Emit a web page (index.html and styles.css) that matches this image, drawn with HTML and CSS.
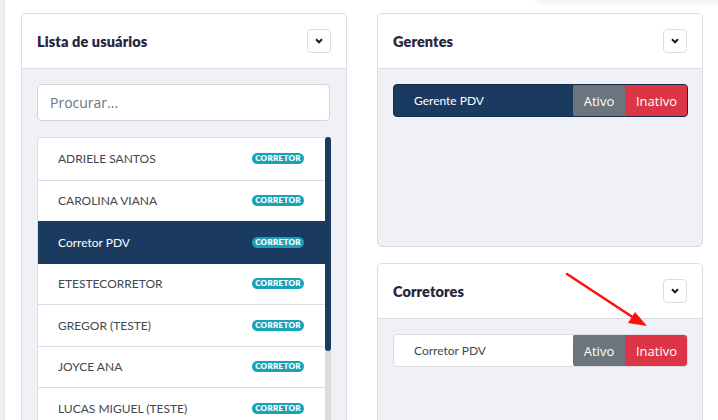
FILE: index.html
```html
<!DOCTYPE html>
<html lang="pt-BR">
<head>
<meta charset="utf-8">
<link rel="stylesheet" href="styles.css">
</head>
<body>
<div class="page">
  <div class="edge"></div>
  <div class="top-shadow"></div>
  <main class="columns">
    <section class="card card-users">
      <header class="card-header">
        <h2 class="card-title">Lista de usuários</h2>
        <button class="collapse-btn" type="button"><svg width="8" height="6" viewBox="0 0 8 6"><path d="M1 1.3 L4 4.3 L7 1.3" fill="none" stroke="#1c1c2a" stroke-width="2"/></svg></button>
      </header>
      <div class="card-body">
        <input class="search" type="text" placeholder="Procurar...">
        <div class="list-wrap">
          <ul class="user-list">
            <li class="user"><span class="user-name">ADRIELE SANTOS</span><span class="badge">CORRETOR</span></li>
            <li class="user"><span class="user-name">CAROLINA VIANA</span><span class="badge">CORRETOR</span></li>
            <li class="user user-active"><span class="user-name">Corretor PDV</span><span class="badge">CORRETOR</span></li>
            <li class="user"><span class="user-name">ETESTECORRETOR</span><span class="badge">CORRETOR</span></li>
            <li class="user"><span class="user-name">GREGOR (TESTE)</span><span class="badge">CORRETOR</span></li>
            <li class="user"><span class="user-name">JOYCE ANA</span><span class="badge">CORRETOR</span></li>
            <li class="user"><span class="user-name">LUCAS MIGUEL (TESTE)</span><span class="badge">CORRETOR</span></li>
          </ul>
          <div class="scrollbar"><div class="scroll-thumb"></div></div>
        </div>
      </div>
    </section>

    <div class="right-col">
      <section class="card card-gerentes">
        <header class="card-header">
          <h2 class="card-title">Gerentes</h2>
          <button class="collapse-btn" type="button"><svg width="8" height="6" viewBox="0 0 8 6"><path d="M1 1.3 L4 4.3 L7 1.3" fill="none" stroke="#1c1c2a" stroke-width="2"/></svg></button>
        </header>
        <div class="card-body">
          <div class="member member-dark">
            <span class="member-name">Gerente PDV</span>
            <div class="btn-group">
              <button class="btn btn-ativo" type="button">Ativo</button>
              <button class="btn btn-inativo" type="button">Inativo</button>
            </div>
          </div>
        </div>
      </section>

      <section class="card card-corretores">
        <header class="card-header">
          <h2 class="card-title">Corretores</h2>
          <button class="collapse-btn" type="button"><svg width="8" height="6" viewBox="0 0 8 6"><path d="M1 1.3 L4 4.3 L7 1.3" fill="none" stroke="#1c1c2a" stroke-width="2"/></svg></button>
        </header>
        <div class="card-body">
          <div class="member member-light">
            <span class="member-name">Corretor PDV</span>
            <div class="btn-group">
              <button class="btn btn-ativo" type="button">Ativo</button>
              <button class="btn btn-inativo" type="button">Inativo</button>
            </div>
          </div>
        </div>
      </section>
    </div>
  </main>
  <svg class="arrow" width="100" height="70" viewBox="0 0 100 70">
    <line x1="7" y1="4" x2="74" y2="48" stroke="#ff1010" stroke-width="2.6" stroke-linecap="round"/>
    <polygon points="87,56 68,53 75,42" fill="#ff1010"/>
  </svg>
</div>
</body>
</html>
```

FILE: styles.css
```css
* { box-sizing: border-box; }
html, body { margin: 0; padding: 0; }
body {
  background: #ffffff;
  font-family: Lato, "Open Sans", sans-serif;
  width: 718px;
  height: 420px;
  overflow: hidden;
}
.page {
  position: relative;
  width: 718px;
  height: 420px;
  overflow: hidden;
  display: flex;
}
.edge {
  width: 5px;
  flex: none;
  background: #eef0f5;
  border-right: 1px solid #e6e8ee;
}
.top-shadow {
  position: absolute;
  top: -20px;
  right: -10px;
  width: 200px;
  height: 20px;
  box-shadow: 0 2px 7px rgba(0, 0, 0, 0.09);
  border-radius: 0 0 0 20px;
}
.columns {
  display: flex;
  gap: 30px;
  padding: 13px 15px 0 16px;
  align-items: flex-start;
}
.card {
  width: 326px;
  border: 1px solid #dcdde2;
  border-radius: 5px;
  background: #f0f1f7;
  overflow: hidden;
}
.card-header {
  height: 55px;
  background: #ffffff;
  border-bottom: 1px solid #dcdde2;
  display: flex;
  align-items: center;
  justify-content: space-between;
  padding: 0 15px 0 15px;
}
.card-title {
  margin: 0;
  font-size: 14.5px;
  font-weight: 800;
  color: #26263d;
  letter-spacing: 0.1px;
}
.collapse-btn {
  width: 24px;
  height: 24px;
  border: 1px solid #dcdde2;
  border-radius: 4px;
  background: #fff;
  padding: 0;
  display: flex;
  align-items: center;
  justify-content: center;
}
.card-body {
  padding: 15px 15px 15px 15px;
}
.search {
  display: block;
  width: 293px;
  height: 37px;
  border: 1px solid #d3d5db;
  border-radius: 4px;
  background: #fff;
  padding: 0 12px;
  font-family: "Open Sans", Lato, sans-serif;
  font-size: 14px;
  color: #495057;
  outline: none;
}
.search::placeholder { color: #6c757d; }
.list-wrap {
  margin-top: 16px;
  display: flex;
  width: 294px;
}
.user-list {
  list-style: none;
  margin: 0;
  padding: 0;
  width: 288px;
  background: #fff;
  border: 1px solid #dcdde2;
  border-right: none;
  border-radius: 4px 0 0 0;
}
.user {
  height: 41.5px;
  display: flex;
  align-items: center;
  justify-content: space-between;
  padding: 0 21px 0 20px;
  border-top: 1px solid #dcdde2;
  font-size: 12px;
  color: #46464f;
}
.user:first-child { border-top: none; }
.user-active {
  background: #1a3a5f;
  color: #ffffff;
  border-top-color: #1a3a5f;
}
.user-active + .user { border-top-color: #1a3a5f; }
.badge {
  display: inline-block;
  width: 52px;
  height: 11px;
  line-height: 11px;
  border-radius: 6px;
  background: #17a2b8;
  color: #fff;
  font-size: 8px;
  font-weight: 800;
  text-align: center;
  letter-spacing: 0.3px;
}
.scrollbar {
  width: 6px;
  background: #dcdcdc;
  border-radius: 3px 3px 0 0;
}
.scroll-thumb {
  height: 214px;
  background: #1a3a5f;
  border-radius: 3px;
}
.right-col {
  display: flex;
  flex-direction: column;
  gap: 16px;
}
.card-gerentes .card-body { height: 177px; }
.card-corretores .card-body { height: 200px; }
.member {
  height: 33px;
  width: 295px;
  border-radius: 4px;
  display: flex;
  align-items: center;
  justify-content: space-between;
  font-size: 12px;
  overflow: hidden;
}
.member-dark {
  background: #1a3a5f;
  color: #fff;
  border: 1px solid #132c4a;
}
.member-light {
  background: #fff;
  color: #46464f;
  border: 1px solid #dcdde2;
}
.member-name { padding-left: 20px; }
.btn-group {
  display: flex;
  height: 33px;
  margin: -1px -1px -1px 0;
}
.btn {
  border: none;
  font-family: "Open Sans", Lato, sans-serif;
  font-size: 13px;
  color: #fff;
  padding: 0;
  height: 33px;
}
.btn-ativo {
  width: 52px;
  background: #6c757d;
  border-radius: 4px 0 0 4px;
}
.btn-inativo {
  width: 63px;
  background: #dc3545;
  border-radius: 0 4px 4px 0;
}
.arrow {
  position: absolute;
  left: 560px;
  top: 270px;
}
```
